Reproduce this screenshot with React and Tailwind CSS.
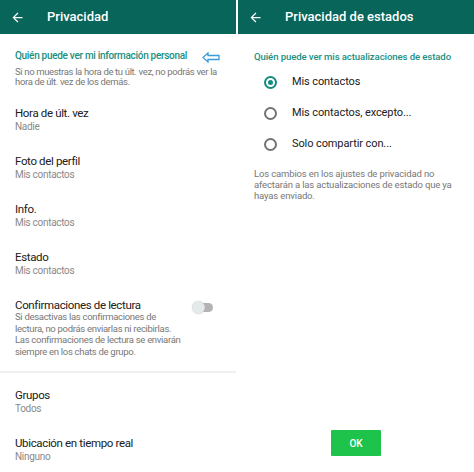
import React from "react";

const font = { fontFamily: "Roboto, 'Noto Sans', Arial, sans-serif" };

function BackArrow() {
  return (
    <svg width="15" height="15" viewBox="0 0 24 24" fill="white">
      <path d="M20 11H7.83l5.59-5.59L12 4l-8 8 8 8 1.41-1.41L7.83 13H20v-2z" />
    </svg>
  );
}

function Header({ title }) {
  return (
    <div className="h-[34px] shrink-0 bg-[#08655a] flex items-center pl-[10px]">
      <BackArrow />
      <span className="ml-[22px] text-white text-[13px] font-medium">{title}</span>
    </div>
  );
}

function Item({ title, sub }) {
  return (
    <div className="px-[15px] pt-[10px] pb-[10px]">
      <div className="text-[11.5px] leading-[16px] tracking-[-0.35px] text-[#202020]">{title}</div>
      <div className="text-[10px] leading-[12px] tracking-[-0.3px] text-[#8a8a8a]">{sub}</div>
    </div>
  );
}

function Radio({ checked, label }) {
  return (
    <div className="flex items-center h-[31px]">
      <div
        className={
          "ml-[26px] w-[13px] h-[13px] rounded-full border-2 flex items-center justify-center shrink-0 " +
          (checked ? "border-[#128c7e]" : "border-[#737373]")
        }
      >
        {checked && <div className="w-[5px] h-[5px] rounded-full bg-[#128c7e]" />}
      </div>
      <span className="ml-[15px] text-[11px] tracking-[-0.1px] text-[#202020]">{label}</span>
    </div>
  );
}

export default function App() {
  return (
    <div style={font} className="w-[474px] h-[472px] overflow-hidden bg-white flex gap-[2px]">
      {/* izquierda */}
      <div className="w-[236px] shrink-0 flex flex-col">
        <Header title="Privacidad" />
        <div className="relative shrink-0 px-[15px] pt-[16px]">
          <div className="text-[10px] leading-[12px] tracking-[-0.3px] font-medium text-[#1b8f7f] whitespace-nowrap">
            Quién puede ver mi información personal
          </div>
          <svg className="absolute left-[202px] top-[18px]" width="18" height="11" viewBox="0 0 18 11" fill="none" stroke="#3b9bd8" strokeWidth="1.3">
            <path d="M1 5.5 L6 1 V3.5 H17 V7.5 H6 V10 Z" />
          </svg>
          <div className="mt-[5px] text-[9.5px] leading-[10px] tracking-[-0.35px] text-[#777] whitespace-nowrap">
            Si no muestras la hora de tu últ. vez, no podrás ver la
            <br />
            hora de últ. vez de los demás.
          </div>
        </div>
        <div className="mt-[8px] shrink-0">
          <Item title="Hora de últ. vez" sub="Nadie" />
          <Item title="Foto del perfil" sub="Mis contactos" />
          <Item title="Info." sub="Mis contactos" />
          <Item title="Estado" sub="Mis contactos" />
          <div className="px-[15px] pt-[11px] pb-[14px] flex">
            <div className="flex-1">
              <div className="text-[11.5px] leading-[14px] tracking-[-0.35px] text-[#202020]">Confirmaciones de lectura</div>
              <div className="-mt-[1px] text-[9.5px] leading-[11.5px] tracking-[-0.3px] text-[#777] whitespace-nowrap">
                Si desactivas las confirmaciones de
                <br />
                lectura, no podrás enviarlas ni recibirlas.
                <br />
                Las confirmaciones de lectura se enviarán
                <br />
                siempre en los chats de grupo.
              </div>
            </div>
            <div className="relative w-[21px] h-[13px] mt-[3px] mr-[8px] shrink-0">
              <div className="absolute left-[3px] right-0 top-[2px] h-[9px] rounded-full bg-[#b3b3b3]" />
              <div className="absolute left-0 top-0 w-[13px] h-[13px] rounded-full bg-[#e4eaea] shadow-[0_0_1px_rgba(0,0,0,0.25)]" />
            </div>
          </div>
          <div className="h-[2px] bg-[#f0f0f0]" />
          <div className="pt-[4px]">
            <Item title="Grupos" sub="Todos" />
            <Item title="Ubicación en tiempo real" sub="Ninguno" />
          </div>
        </div>
      </div>

      {/* derecha */}
      <div className="w-[236px] shrink-0 flex flex-col">
        <Header title="Privacidad de estados" />
        <div className="px-[16px] pt-[17px] text-[9.6px] leading-[12px] tracking-[-0.1px] font-medium text-[#1b8f7f] whitespace-nowrap">
          Quién puede ver mis actualizaciones de estado
        </div>
        <div className="mt-[4px]">
          <Radio checked label="Mis contactos" />
          <Radio label="Mis contactos, excepto..." />
          <Radio label="Solo compartir con..." />
        </div>
        <div className="px-[16px] mt-[8px] text-[9.5px] leading-[11px] tracking-[-0.15px] text-[#777] whitespace-nowrap">
          Los cambios en los ajustes de privacidad no
          <br />
          afectarán a las actualizaciones de estado que ya
          <br />
          hayas enviado.
        </div>
        <div className="mt-auto mb-[16px] flex justify-center">
          <div className="w-[50px] h-[26px] bg-[#1ec34c] rounded-[1px] flex items-center justify-center text-white text-[10px] font-medium">
            OK
          </div>
        </div>
      </div>
    </div>
  );
}
